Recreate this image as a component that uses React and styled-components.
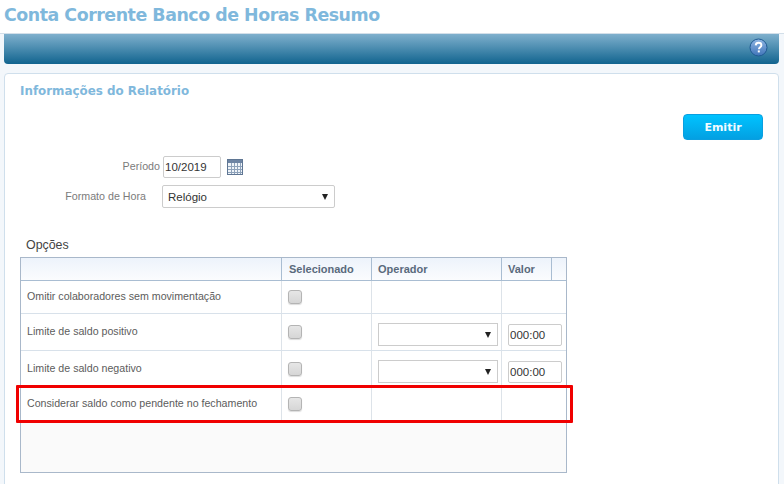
import React from "react";
import styled, { createGlobalStyle } from "styled-components";

const Global = createGlobalStyle`
  html, body { margin: 0; padding: 0; background: #fff; }
  body { font-family: "Liberation Sans", Arial, sans-serif; width: 784px; height: 484px; overflow: hidden; }
`;

const Page = styled.div`
  position: relative;
  width: 784px;
  height: 484px;
  overflow: hidden;
  background: #f3f7fb;
`;
const TitleBar = styled.header`
  height: 33px;
  background: #fff;
  border-bottom: 1px solid #d3dfe9;
  padding-left: 4px;
`;
const Title = styled.h1`
  margin: 0;
  font: bold 17.4px/30px "DejaVu Sans", Verdana, sans-serif;
  letter-spacing: -0.47px;
  color: #7fb8dc;
  white-space: nowrap;
`;
const Toolbar = styled.div`
  height: 30px;
  box-sizing: border-box;
  margin: 0 5px 0 4px;
  border-radius: 0 0 4px 4px;
  background: linear-gradient(#7fb0cd, #11648f);
  display: flex;
  align-items: center;
  justify-content: flex-end;
  padding: 0 11px 4px 0;
`;
const Panel = styled.section`
  margin: 9px 5px 0 4px;
  height: 420px;
  background: #fff;
  border: 1px solid #cfdfec;
  border-radius: 4px 4px 0 0;
  box-sizing: border-box;
  padding: 9px 15px 0;
`;
const PanelTitle = styled.h2`
  margin: 0;
  font: bold 11.9px/17px "DejaVu Sans", Verdana, sans-serif;
  color: #7fb8dc;
`;
const Actions = styled.div`
  display: flex;
  justify-content: flex-end;
  margin-top: 14px;
`;
const EmitButton = styled.button`
  width: 80px;
  height: 26px;
  border: 1px solid #0a9fe0;
  border-radius: 4px;
  background: linear-gradient(#00c3ff, #03a0e2);
  color: #f2fbff;
  font: bold 11px "DejaVu Sans", Verdana, sans-serif;
  padding: 0;
`;
const FormRow = styled.div`
  display: flex;
  align-items: center;
  height: ${p => p.$h}px;
  margin-top: ${p => p.$mt}px;
`;
const FieldLabel = styled.label`
  width: ${p => p.$w}px;
  text-align: right;
  box-sizing: border-box;
  padding-right: ${p => p.$pr}px;
  margin-bottom: 2px;
  font-size: 10.7px;
  color: #7b7b7b;
`;
const DateInput = styled.div`
  width: 58px;
  height: 22px;
  box-sizing: border-box;
  border: 1px solid #ccc;
  border-radius: 2px;
  background: #fff;
  font-size: 11.5px;
  line-height: 20px;
  padding-left: 1px;
  color: #333;
`;
const CalendarIcon = styled.svg`
  margin-left: 6px;
  display: block;
`;
const SelectBox = styled.div`
  display: flex;
  align-items: center;
  justify-content: space-between;
  box-sizing: border-box;
  width: ${p => p.$w}px;
  height: ${p => p.$h}px;
  border: 1px solid #ccc;
  border-radius: ${p => p.$r || 0}px;
  background: #fff;
  font-size: 11.5px;
  color: #333;
  padding: 0 6px 0 5px;
`;
const Arrow = styled.span`
  width: 0;
  height: 0;
  border-left: 3px solid transparent;
  border-right: 3px solid transparent;
  border-top: 6px solid #222;
`;
const SectionLabel = styled.h3`
  margin: 29px 0 0 6px;
  font: 12.4px/17px "Liberation Sans", Arial, sans-serif;
  color: #444;
`;
const Table = styled.div`
  margin-top: 3px;
  width: 547px;
  height: 216px;
  box-sizing: border-box;
  border: 1px solid #a9b8ca;
  background: #fafafa;
`;
const HeadRow = styled.div`
  display: grid;
  grid-template-columns: 261px 90px 130px 50px 1fr;
  height: 22px;
  background: linear-gradient(#edf3fb, #fbfcfe);
  border-bottom: 1px solid #a9bdd2;
`;
const HeadCell = styled.div`
  box-sizing: border-box;
  padding-left: ${p => p.$pl ?? 7}px;
  font: bold 11px/22px "Liberation Sans", Arial, sans-serif;
  color: #5a6a7c;
  border-right: 1px solid #a9bdd2;
  &:last-child { border-right: 0; }
`;
const Row = styled.div`
  display: grid;
  grid-template-columns: 261px 90px 130px 1fr;
  height: ${p => p.$h}px;
  background: #fff;
  border-bottom: 1px solid #d8e1ea;
`;
const Cell = styled.div`
  box-sizing: border-box;
  display: flex;
  align-items: center;
  padding-left: 6px;
  padding-top: ${p => p.$pt ?? 0}px;
  padding-bottom: ${p => p.$pb ?? 0}px;
  font-size: 10.65px;
  color: #5c5c5c;
  border-right: 1px solid #dde3e9;
  &:last-child { border-right: 0; }
`;
const Check = styled.span`
  width: 12px;
  height: 12px;
  border: 1px solid #b4b4b4;
  border-radius: 3px;
  background: linear-gradient(#e6e6e6, #d6d6d6);
  box-shadow: 0 1px 1px #ddd;
`;
const TimeInput = styled.div`
  width: 54px;
  height: 22px;
  box-sizing: border-box;
  border: 1px solid #ccc;
  border-radius: 2px;
  background: #fff;
  font-size: 11.5px;
  line-height: 20px;
  padding-left: 1px;
  color: #333;
`;
const Highlight = styled.div`
  position: absolute;
  left: 16px;
  top: 385px;
  width: 557px;
  height: 38px;
  box-sizing: border-box;
  border: 3px solid #f00000;
  border-radius: 1px;
  pointer-events: none;
`;

const HelpIcon = () => (
  <svg width="19" height="19" viewBox="0 0 19 19">
    <defs>
      <linearGradient id="h" x1="0" y1="0" x2="0" y2="1">
        <stop offset="0" stopColor="#8fb6e4" />
        <stop offset="1" stopColor="#3f74b8" />
      </linearGradient>
    </defs>
    <circle cx="9.5" cy="9.5" r="8.5" fill="url(#h)" stroke="#1f5a92" strokeWidth="1" />
    <path d="M6.7 7.4c.1-1.7 1.3-2.6 2.9-2.6 1.6 0 2.8.9 2.8 2.4 0 2-2.5 2-2.5 4" fill="none" stroke="#fff" strokeWidth="1.9" />
    <rect x="8.8" y="12.4" width="2" height="2" fill="#fff" />
  </svg>
);

const Calendar = () => (
  <CalendarIcon width="16" height="16" viewBox="0 0 16 16">
    <rect x="0.5" y="0.5" width="15" height="15" fill="#eef3f8" stroke="#5f7693" />
    <rect x="1" y="1" width="14" height="3" fill="#6d84a3" />
    <path d="M1 7.5h14M1 10.5h14M1 13.5h14M4.5 4v11M7.5 4v11M10.5 4v11M13.5 4v11" stroke="#8ea2ba" strokeWidth="1" fill="none" />
  </CalendarIcon>
);

const OperatorCell = () => (
  <Cell $pt={5}>
    <SelectBox $w={120} $h={23}><span /><Arrow /></SelectBox>
  </Cell>
);

const ValueCell = () => (
  <Cell $pt={5}><TimeInput>000:00</TimeInput></Cell>
);

export default function App() {
  return (
    <Page>
      <Global />
      <TitleBar><Title>Conta Corrente Banco de Horas Resumo</Title></TitleBar>
      <Toolbar><HelpIcon /></Toolbar>
      <Panel>
        <PanelTitle>Informações do Relatório</PanelTitle>
        <Actions><EmitButton>Emitir</EmitButton></Actions>
        <FormRow $h={22} $mt={16}>
          <FieldLabel $w={143} $pr={3}>Período</FieldLabel>
          <DateInput>10/2019</DateInput>
          <Calendar />
        </FormRow>
        <FormRow $h={23} $mt={7}>
          <FieldLabel $w={142} $pr={16}>Formato de Hora</FieldLabel>
          <SelectBox $w={173} $h={23} $r={2}>Relógio<Arrow /></SelectBox>
        </FormRow>
        <SectionLabel>Opções</SectionLabel>
        <Table>
          <HeadRow>
            <HeadCell />
            <HeadCell>Selecionado</HeadCell>
            <HeadCell $pl={6}>Operador</HeadCell>
            <HeadCell $pl={6}>Valor</HeadCell>
            <HeadCell />
          </HeadRow>
          <Row $h={32}>
            <Cell $pb={2}>Omitir colaboradores sem movimentação</Cell>
            <Cell><Check /></Cell><Cell /><Cell />
          </Row>
          <Row $h={36}>
            <Cell $pb={2}>Limite de saldo positivo</Cell>
            <Cell><Check /></Cell>
            <OperatorCell />
            <ValueCell />
          </Row>
          <Row $h={36}>
            <Cell $pb={2}>Limite de saldo negativo</Cell>
            <Cell><Check /></Cell>
            <OperatorCell />
            <ValueCell />
          </Row>
          <Row $h={32}>
            <Cell $pb={2}>Considerar saldo como pendente no fechamento</Cell>
            <Cell><Check /></Cell><Cell /><Cell />
          </Row>
        </Table>
      </Panel>
      <Highlight />
    </Page>
  );
}
